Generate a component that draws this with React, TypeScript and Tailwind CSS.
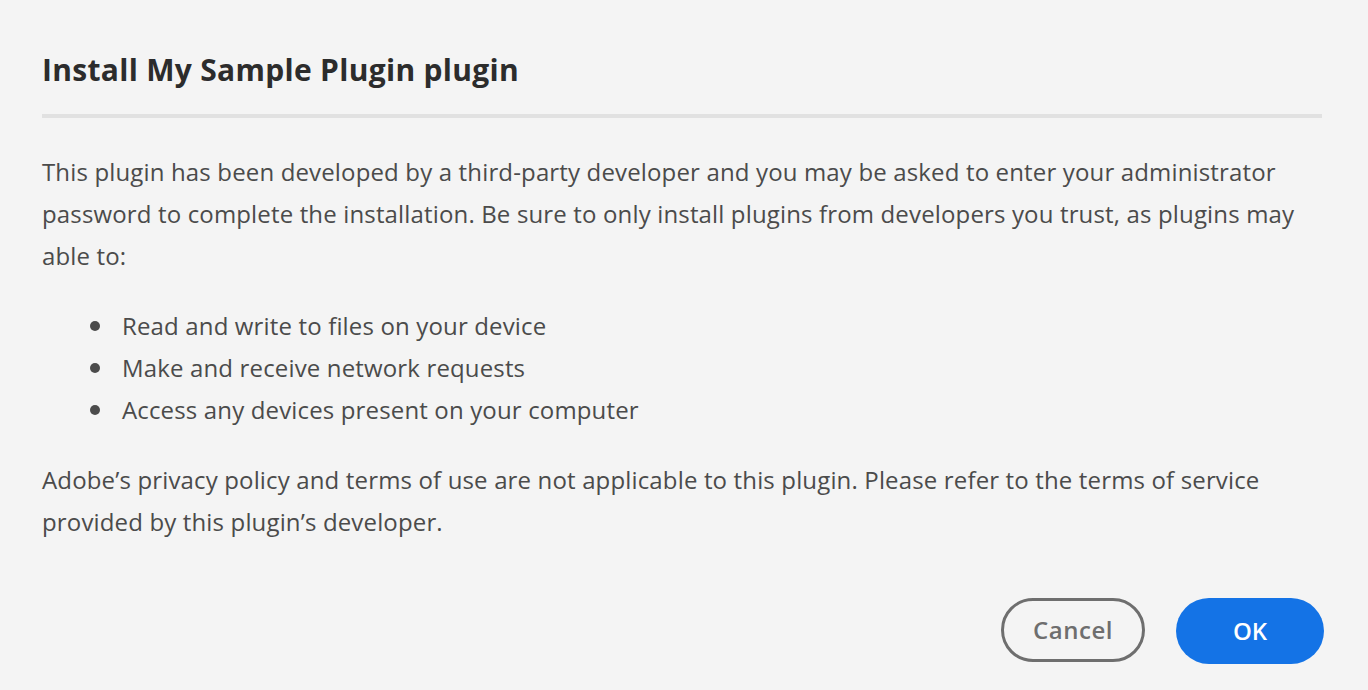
import React from 'react';

const bullets = [
  'Read and write to files on your device',
  'Make and receive network requests',
  'Access any devices present on your computer',
];

export default function App() {
  return (
    <div className="w-[1368px] h-[690px] bg-[#f4f4f4] px-[42px] pt-[46px] text-[#4b4b4b] font-['Open_Sans',sans-serif] overflow-hidden">
      {/* Header */}
      <h1 className="text-[30px] leading-[48px] font-bold text-[#2c2c2c] tracking-[0.3px]">Install My Sample Plugin plugin</h1>
      <div className="mt-[20px] h-[4px] w-[1280px] bg-[#e1e1e1]" />

      {/* Body */}
      <div className="mt-[33px] text-[24px] leading-[42px] tracking-[0.15px] whitespace-nowrap">
        <p>
          This plugin has been developed by a third-party developer and you may be asked to enter your administrator
          <br />
          password to complete the installation. Be sure to only install plugins from developers you trust, as plugins may
          <br />
          able to:
        </p>
        <ul className="mt-[28px] flex flex-col">
          {bullets.map((b) => (
            <li key={b} className="flex items-center">
              <span className="ml-[48px] mr-[22px] size-[10px] rounded-full bg-[#4b4b4b]" />
              {b}
            </li>
          ))}
        </ul>
        <p className="mt-[28px]">
          Adobe’s privacy policy and terms of use are not applicable to this plugin. Please refer to the terms of service
          <br />
          provided by this plugin’s developer.
        </p>
      </div>

      {/* Buttons */}
      <div className="mt-[55px] w-[1282px] flex justify-end gap-[31px]">
        <button className="h-[64px] w-[144px] rounded-full border-[3px] border-[#6e6e6e] text-[24px] font-semibold tracking-[0.5px] text-[#6e6e6e]">
          Cancel
        </button>
        <button className="h-[66px] w-[148px] rounded-full bg-[#1473e6] text-[24px] font-semibold text-white">OK</button>
      </div>
    </div>
  );
}
